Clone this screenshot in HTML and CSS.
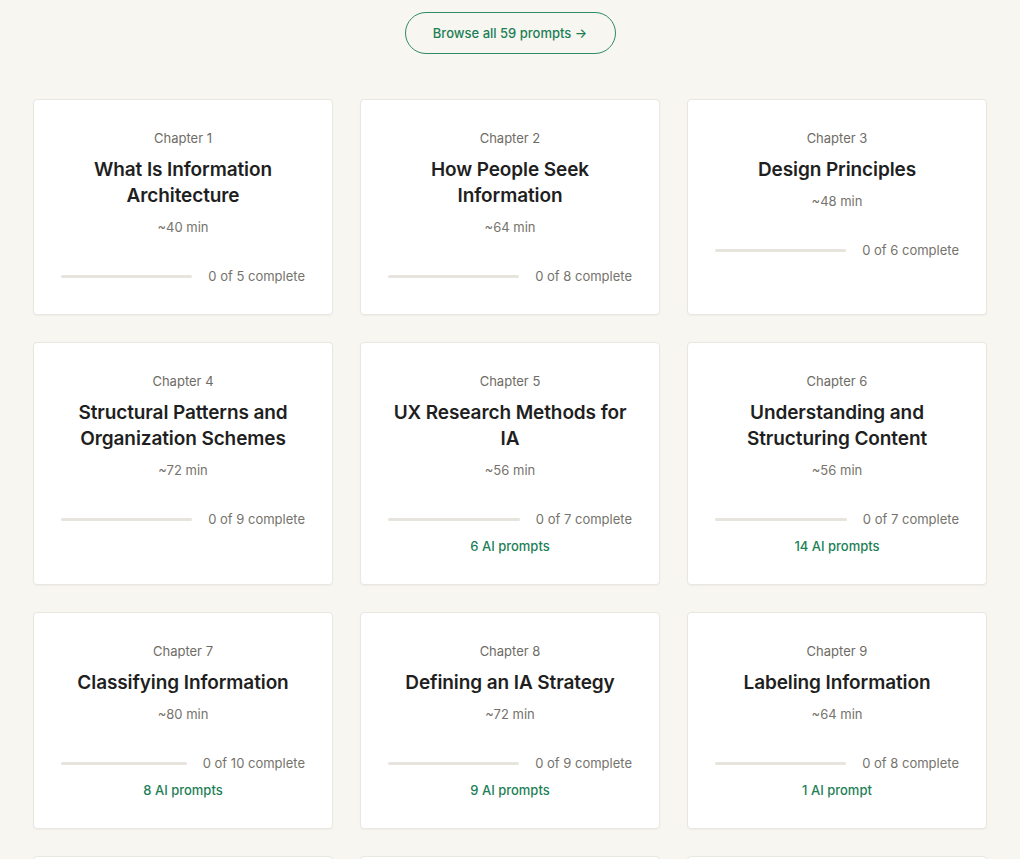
FILE: index.html
```html
<!DOCTYPE html>
<html lang="en">
<head>
<meta charset="utf-8">
<title>Chapters</title>
<link rel="stylesheet" href="styles.css">
</head>
<body>
<main class="page">
  <div class="browse">
    <a class="browse-btn" href="#">Browse all 59 prompts →</a>
  </div>

  <section class="chapters">
    <article class="card">
      <div class="card-label">Chapter 1</div>
      <h2 class="card-title">What Is Information Architecture</h2>
      <div class="card-time">~40 min</div>
      <div class="progress"><span class="bar"></span><span class="progress-text">0 of 5 complete</span></div>
    </article>

    <article class="card">
      <div class="card-label">Chapter 2</div>
      <h2 class="card-title">How People Seek Information</h2>
      <div class="card-time">~64 min</div>
      <div class="progress"><span class="bar"></span><span class="progress-text">0 of 8 complete</span></div>
    </article>

    <article class="card">
      <div class="card-label">Chapter 3</div>
      <h2 class="card-title">Design Principles</h2>
      <div class="card-time">~48 min</div>
      <div class="progress"><span class="bar"></span><span class="progress-text">0 of 6 complete</span></div>
    </article>

    <article class="card">
      <div class="card-label">Chapter 4</div>
      <h2 class="card-title">Structural Patterns and Organization Schemes</h2>
      <div class="card-time">~72 min</div>
      <div class="progress"><span class="bar"></span><span class="progress-text">0 of 9 complete</span></div>
    </article>

    <article class="card">
      <div class="card-label">Chapter 5</div>
      <h2 class="card-title">UX Research Methods for IA</h2>
      <div class="card-time">~56 min</div>
      <div class="progress"><span class="bar"></span><span class="progress-text">0 of 7 complete</span></div>
      <a class="card-prompts" href="#">6 AI prompts</a>
    </article>

    <article class="card">
      <div class="card-label">Chapter 6</div>
      <h2 class="card-title">Understanding and Structuring Content</h2>
      <div class="card-time">~56 min</div>
      <div class="progress"><span class="bar"></span><span class="progress-text">0 of 7 complete</span></div>
      <a class="card-prompts" href="#">14 AI prompts</a>
    </article>

    <article class="card">
      <div class="card-label">Chapter 7</div>
      <h2 class="card-title">Classifying Information</h2>
      <div class="card-time">~80 min</div>
      <div class="progress"><span class="bar"></span><span class="progress-text">0 of 10 complete</span></div>
      <a class="card-prompts" href="#">8 AI prompts</a>
    </article>

    <article class="card">
      <div class="card-label">Chapter 8</div>
      <h2 class="card-title">Defining an IA Strategy</h2>
      <div class="card-time">~72 min</div>
      <div class="progress"><span class="bar"></span><span class="progress-text">0 of 9 complete</span></div>
      <a class="card-prompts" href="#">9 AI prompts</a>
    </article>

    <article class="card">
      <div class="card-label">Chapter 9</div>
      <h2 class="card-title">Labeling Information</h2>
      <div class="card-time">~64 min</div>
      <div class="progress"><span class="bar"></span><span class="progress-text">0 of 8 complete</span></div>
      <a class="card-prompts" href="#">1 AI prompt</a>
    </article>

    <article class="card">
      <div class="card-label">Chapter 10</div>
      <h2 class="card-title">Navigation Systems</h2>
      <div class="card-time">~64 min</div>
      <div class="progress"><span class="bar"></span><span class="progress-text">0 of 8 complete</span></div>
    </article>

    <article class="card">
      <div class="card-label">Chapter 11</div>
      <h2 class="card-title">Search Systems</h2>
      <div class="card-time">~56 min</div>
      <div class="progress"><span class="bar"></span><span class="progress-text">0 of 7 complete</span></div>
    </article>

    <article class="card">
      <div class="card-label">Chapter 12</div>
      <h2 class="card-title">Metadata and Taxonomies</h2>
      <div class="card-time">~64 min</div>
      <div class="progress"><span class="bar"></span><span class="progress-text">0 of 8 complete</span></div>
    </article>
  </section>
</main>
</body>
</html>
```

FILE: styles.css
```css
* {
  box-sizing: border-box;
}

html,
body {
  margin: 0;
  background: #f7f6f1;
}

body {
  font-family: Inter, "Noto Sans", sans-serif;
  color: #1f1f1f;
  -webkit-font-smoothing: antialiased;
}

.page {
  width: 954px;
  margin: 0 auto;
  padding-top: 12px;
  padding-bottom: 40px;
}

/* Browse-all pill */
.browse {
  display: flex;
  justify-content: center;
  margin-bottom: 45px;
}

.browse-btn {
  display: inline-flex;
  align-items: center;
  justify-content: center;
  width: 211px;
  height: 42px;
  border: 1.5px solid #2f8b66;
  border-radius: 999px;
  color: #1d7f57;
  font-size: 13px;
  font-weight: 500;
  text-decoration: none;
}

/* Chapter grid */
.chapters {
  display: grid;
  grid-template-columns: repeat(3, 1fr);
  column-gap: 27px;
  row-gap: 27px;
}

.card {
  display: flex;
  flex-direction: column;
  align-items: stretch;
  text-align: center;
  background: #ffffff;
  border: 1px solid #e9e7e0;
  border-radius: 4px;
  box-shadow: 0 1px 2px rgba(40, 36, 20, 0.04);
  padding: 28px 27px 28px;
}

.card-label {
  font-size: 13px;
  line-height: 20px;
  color: #6e6c66;
}

.card-title {
  margin: 9px 0 8px;
  font-size: 19px;
  line-height: 26px;
  font-weight: 600;
  color: #1f1f1f;
  letter-spacing: -0.1px;
}

.card-time {
  font-size: 13px;
  line-height: 20px;
  color: #75736c;
}

.progress {
  display: flex;
  align-items: center;
  gap: 16px;
  margin-top: 29px;
  height: 20px;
}

.bar {
  flex: 1;
  height: 3px;
  border-radius: 2px;
  background: #e6e4dc;
}

.progress-text {
  font-size: 13px;
  line-height: 20px;
  color: #75736c;
  white-space: nowrap;
}

.card-prompts {
  margin-top: 7px;
  font-size: 13px;
  line-height: 20px;
  font-weight: 500;
  color: #1d7f57;
  text-decoration: none;
}
```
